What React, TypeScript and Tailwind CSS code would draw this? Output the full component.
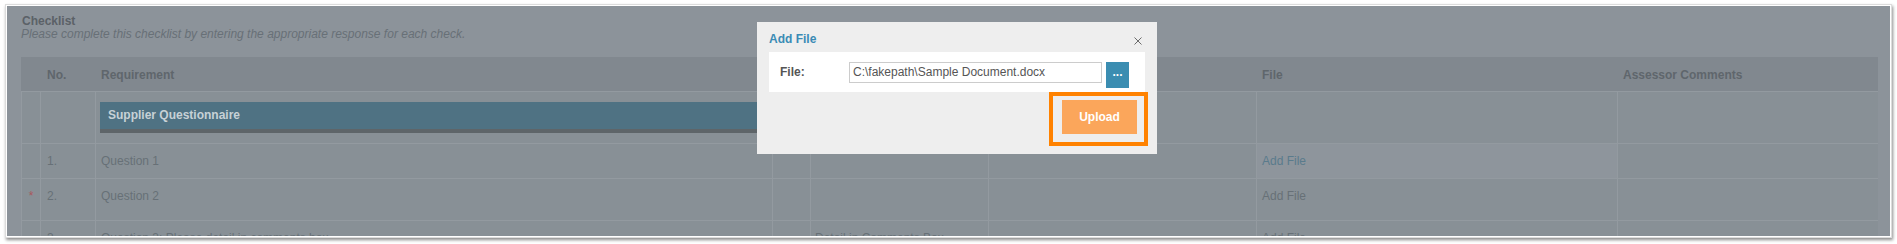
import React from "react";

const cols = "grid grid-cols-[19px_55px_677px_38px_178px_268px_361px_261px]";
const cell = "border-l border-t border-[#939aa0] bg-[#889096] pt-[10px] leading-[14px] text-[12px] text-[#677077] overflow-hidden whitespace-nowrap";

export default function App() {
  return (
    <div className="w-[1897px] h-[244px] bg-white pl-[5px] pt-[4px] font-['Liberation_Sans',Arial,sans-serif]">
      <div className="w-[1887px] h-[234px] border border-[#dcdcdc] bg-white p-[1px] shadow-[1px_2px_3px_rgba(0,0,0,0.45)]">
        <div className="relative w-[1883px] h-[230px] overflow-hidden bg-[#8c939a] pl-[14px] pt-[9px]">
          <div className="text-[12px] leading-[12px] font-bold text-[#5b6167] pl-[1px]">Checklist</div>
          <div className="text-[12px] leading-[14px] italic text-[#687077]">
            Please complete this checklist by entering the appropriate response for each check.
          </div>

          <div className="mt-[16px] w-[1857px]">
            {/* header */}
            <div className={`${cols} h-[34px] bg-[#81888f] text-[12px] font-bold text-[#5f666c] leading-[14px]`}>
              <div />
              <div className="pl-[7px] pt-[11px]">No.</div>
              <div className="pl-[6px] pt-[11px]">Requirement</div>
              <div />
              <div />
              <div />
              <div className="pl-[6px] pt-[11px]">File</div>
              <div className="pl-[6px] pt-[11px]">Assessor Comments</div>
            </div>

            {/* section row */}
            <div className={`${cols} h-[52px]`}>
              <div className={cell} />
              <div className={cell} />
              <div className="border-l border-t border-[#939aa0] bg-[#889096] pt-[10px] pl-[4px] pr-[5px]">
                <div className="h-[31px] bg-[#4f7283] border-b-4 border-[#5e6569] pl-[8px] text-[12px] leading-[27px] font-bold text-[#c7d1d6]">
                  Supplier Questionnaire
                </div>
              </div>
              <div className={cell} />
              <div className={cell} />
              <div className={cell} />
              <div className={cell} />
              <div className={cell} />
            </div>

            {/* row 1 */}
            <div className={`${cols} h-[35px]`}>
              <div className={cell} />
              <div className={`${cell} pl-[6px]`}>1.</div>
              <div className={`${cell} pl-[5px]`}>Question 1</div>
              <div className={cell} />
              <div className={cell} />
              <div className={cell} />
              <div className="border-l border-t border-[#939aa0] bg-[#8e959c] pt-[10px] pl-[5px] leading-[14px] text-[12px] text-[#5a7b8c]">Add File</div>
              <div className={cell} />
            </div>

            {/* row 2 */}
            <div className={`${cols} h-[42px]`}>
              <div className={`${cell} text-center text-[#a8585d]`}>*</div>
              <div className={`${cell} pl-[6px]`}>2.</div>
              <div className={`${cell} pl-[5px]`}>Question 2</div>
              <div className={cell} />
              <div className={cell} />
              <div className={cell} />
              <div className={`${cell} pl-[5px] text-[#5a7b8c]`}>Add File</div>
              <div className={cell} />
            </div>

            {/* row 3 */}
            <div className={`${cols} h-[40px]`}>
              <div className={cell} />
              <div className={`${cell} pl-[6px]`}>3.</div>
              <div className={`${cell} pl-[5px]`}>Question 3: Please detail in comments box</div>
              <div className={cell} />
              <div className={`${cell} pl-[4px]`}>Detail in Comments Box</div>
              <div className={cell} />
              <div className={`${cell} pl-[5px] text-[#5a7b8c]`}>Add File</div>
              <div className={cell} />
            </div>
          </div>

          {/* modal */}
          <div className="absolute left-[750px] top-[16px] w-[400px] h-[132px] bg-[#eeeeee] pt-[10px]">
            <div className="flex justify-between items-start pl-[12px] pr-[15px] h-[20px]">
              <div className="text-[12px] leading-[14px] font-bold text-[#3a8bb5]">Add File</div>
              <svg width="8" height="8" viewBox="0 0 8 8" className="mt-[5px]">
                <path d="M0.5 0.5 L7.5 7.5 M7.5 0.5 L0.5 7.5" stroke="#6b6b6b" strokeWidth="1" fill="none" />
              </svg>
            </div>
            <div className="mx-[12px] h-[40px] bg-white flex items-start pt-[10px] pl-[11px]">
              <div className="w-[69px] mt-[3px] text-[12px] leading-[14px] font-bold text-[#555555]">File:</div>
              <div className="w-[253px] h-[21px] border border-[#cccccc] bg-white pl-[3px] text-[12px] leading-[19px] text-[#555555] whitespace-nowrap overflow-hidden">
                C:\fakepath\Sample Document.docx
              </div>
              <div className="ml-[4px] w-[23px] h-[26px] bg-[#3b8db1] text-center text-[12px] leading-[21px] font-bold text-white">
                ...
              </div>
            </div>
            <div className="flex justify-end pr-[9px]">
              <div className="w-[99px] h-[54px] border-4 border-[#ff8200] pl-[9px] pt-[4px]">
                <div className="w-[75px] h-[34px] bg-[#fba65b] text-center text-[12px] leading-[34px] font-bold text-white">
                  Upload
                </div>
              </div>
            </div>
          </div>
        </div>
      </div>
    </div>
  );
}
